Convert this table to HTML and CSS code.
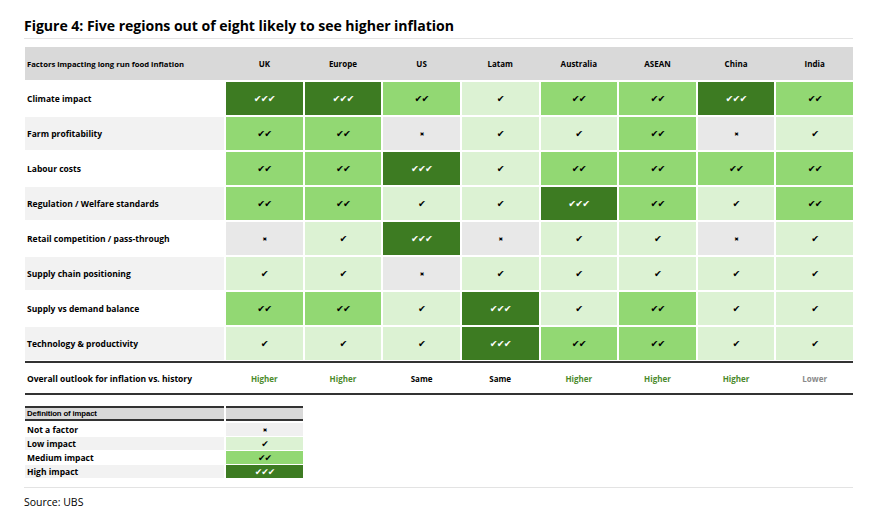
FILE: index.html
```html
<!DOCTYPE html>
<html>
<head>
<meta charset="utf-8">
<link rel="stylesheet" href="styles.css">
</head>
<body>
<div class="page">
  <h1 class="title">Figure 4: Five regions out of eight likely to see higher inflation</h1>
  <div class="rule-light"></div>

  <div class="matrix">
    <div class="row head">
      <div class="label small">Factors impacting long run food inflation</div>
      <div class="col">UK</div><div class="col">Europe</div><div class="col">US</div><div class="col">Latam</div>
      <div class="col">Australia</div><div class="col">ASEAN</div><div class="col">China</div><div class="col">India</div>
    </div>

    <div class="row">
      <div class="label">Climate impact</div>
      <div class="cell hi">✔✔✔</div><div class="cell hi">✔✔✔</div><div class="cell med">✔✔</div><div class="cell low">✔</div>
      <div class="cell med">✔✔</div><div class="cell med">✔✔</div><div class="cell hi">✔✔✔</div><div class="cell med">✔✔</div>
    </div>
    <div class="row alt">
      <div class="label">Farm profitability</div>
      <div class="cell med">✔✔</div><div class="cell med">✔✔</div><div class="cell none">✖</div><div class="cell low">✔</div>
      <div class="cell low">✔</div><div class="cell med">✔✔</div><div class="cell none">✖</div><div class="cell low">✔</div>
    </div>
    <div class="row">
      <div class="label">Labour costs</div>
      <div class="cell med">✔✔</div><div class="cell med">✔✔</div><div class="cell hi">✔✔✔</div><div class="cell low">✔</div>
      <div class="cell med">✔✔</div><div class="cell med">✔✔</div><div class="cell med">✔✔</div><div class="cell med">✔✔</div>
    </div>
    <div class="row alt">
      <div class="label">Regulation / Welfare standards</div>
      <div class="cell med">✔✔</div><div class="cell med">✔✔</div><div class="cell low">✔</div><div class="cell low">✔</div>
      <div class="cell hi">✔✔✔</div><div class="cell med">✔✔</div><div class="cell low">✔</div><div class="cell med">✔✔</div>
    </div>
    <div class="row">
      <div class="label">Retail competition / pass-through</div>
      <div class="cell none">✖</div><div class="cell low">✔</div><div class="cell hi">✔✔✔</div><div class="cell none">✖</div>
      <div class="cell low">✔</div><div class="cell low">✔</div><div class="cell none">✖</div><div class="cell low">✔</div>
    </div>
    <div class="row alt">
      <div class="label">Supply chain positioning</div>
      <div class="cell low">✔</div><div class="cell low">✔</div><div class="cell none">✖</div><div class="cell low">✔</div>
      <div class="cell low">✔</div><div class="cell low">✔</div><div class="cell low">✔</div><div class="cell low">✔</div>
    </div>
    <div class="row">
      <div class="label">Supply vs demand balance</div>
      <div class="cell med">✔✔</div><div class="cell med">✔✔</div><div class="cell low">✔</div><div class="cell hi">✔✔✔</div>
      <div class="cell low">✔</div><div class="cell med">✔✔</div><div class="cell low">✔</div><div class="cell low">✔</div>
    </div>
    <div class="row alt">
      <div class="label">Technology &amp; productivity</div>
      <div class="cell low">✔</div><div class="cell low">✔</div><div class="cell low">✔</div><div class="cell hi">✔✔✔</div>
      <div class="cell med">✔✔</div><div class="cell med">✔✔</div><div class="cell low">✔</div><div class="cell low">✔</div>
    </div>
  </div>

  <div class="row outlook">
    <div class="label">Overall outlook for inflation vs. history</div>
    <div class="col up">Higher</div><div class="col up">Higher</div><div class="col">Same</div><div class="col">Same</div>
    <div class="col up">Higher</div><div class="col up">Higher</div><div class="col up">Higher</div><div class="col down">Lower</div>
  </div>

  <div class="legend">
    <div class="lrow lhead">
      <div class="llabel">Definition of impact</div>
      <div class="lcell"></div>
    </div>
    <div class="lrow">
      <div class="llabel">Not a factor</div>
      <div class="lcell none">✖</div>
    </div>
    <div class="lrow alt">
      <div class="llabel">Low impact</div>
      <div class="lcell low">✔</div>
    </div>
    <div class="lrow">
      <div class="llabel">Medium impact</div>
      <div class="lcell med">✔✔</div>
    </div>
    <div class="lrow alt">
      <div class="llabel">High impact</div>
      <div class="lcell hi">✔✔✔</div>
    </div>
  </div>

  <div class="rule-foot"></div>
  <div class="source">Source: UBS</div>
</div>
</body>
</html>
```

FILE: styles.css
```css
* { box-sizing: border-box; }
html, body { margin: 0; padding: 0; background: #fff; }
body {
  font-family: "Open Sans", "Noto Sans", "DejaVu Sans", sans-serif;
  color: #000;
}
.page {
  width: 872px;
  padding: 16px 19px 0 24px;
}
.title {
  margin: 0;
  font-size: 14.1px;
  line-height: 19px;
  font-weight: 700;
  letter-spacing: -0.05px;
}
.rule-light {
  margin-top: 3px;
  height: 1px;
  background: #e3e3e3;
}
.matrix {
  margin-top: 8px;
  display: flex;
  flex-direction: column;
  gap: 2px;
  margin-left: 1px;
}
.row {
  display: grid;
  grid-template-columns: 199px repeat(8, 1fr);
  column-gap: 2px;
  height: 33px;
  align-items: stretch;
}
.row.head {
  background: #d9d9d9;
  font-weight: 700;
  font-size: 8px;
}
.label {
  display: flex;
  align-items: center;
  padding-left: 2px;
  font-size: 8.5px;
  font-weight: 700;
}
.label.small { font-size: 7.7px; }
.row.alt .label { background: #f2f2f2; }
.col {
  display: flex;
  align-items: center;
  justify-content: center;
  font-weight: 700;
  font-size: 8px;
}
.cell {
  display: flex;
  align-items: center;
  justify-content: center;
  font-family: "DejaVu Sans", sans-serif;
  font-size: 9.5px;
  letter-spacing: -1px;
  color: #000;
}
.cell.hi { background: #3d7b22; color: #fff; }
.cell.med { background: #92d873; }
.cell.low { background: #dcf2d3; }
.cell.none { background: #e8e8e8; font-size: 5.5px; }

.outlook {
  margin-top: 1px;
  margin-left: 1px;
  height: 34px;
  border-top: 2px solid #333;
  border-bottom: 2px solid #333;
}
.outlook .label { font-size: 8.5px; }
.outlook .col { font-size: 8px; }
.col.up { color: #4b8a2c; }
.col.down { color: #8a8a8a; }

.legend {
  margin-top: 11px;
  margin-left: 1px;
  width: 278px;
  display: flex;
  flex-direction: column;
  gap: 1px;
}
.lrow {
  display: grid;
  grid-template-columns: 199px 1fr;
  column-gap: 2px;
  height: 13px;
}
.llabel {
  display: flex;
  align-items: center;
  padding-left: 2px;
  font-size: 8.5px;
  font-weight: 700;
}
.lrow.alt .llabel { background: #f2f2f2; }
.lcell {
  display: flex;
  align-items: center;
  justify-content: center;
  font-family: "DejaVu Sans", sans-serif;
  font-size: 9px;
  letter-spacing: -1px;
}
.lhead {
  height: 15px;
  margin-bottom: 1px;
}
.lhead .llabel, .lhead .lcell {
  background: #d9d9d9;
  border-top: 2px solid #333;
  border-bottom: 2px solid #333;
  font-family: "Liberation Sans", "Open Sans", sans-serif;
  font-size: 7.8px;
  letter-spacing: -0.15px;
}
.lcell.none { background: #f0f0f0; font-size: 5.5px; }
.lcell.low { background: #dcf2d3; }
.lcell.med { background: #92d873; }
.lcell.hi { background: #3d7b22; color: #fff; }

.rule-foot {
  margin-top: 9px;
  height: 1px;
  background: #e3e3e3;
}
.source {
  margin-top: 7px;
  font-size: 10.5px;
  line-height: 14px;
}
```
